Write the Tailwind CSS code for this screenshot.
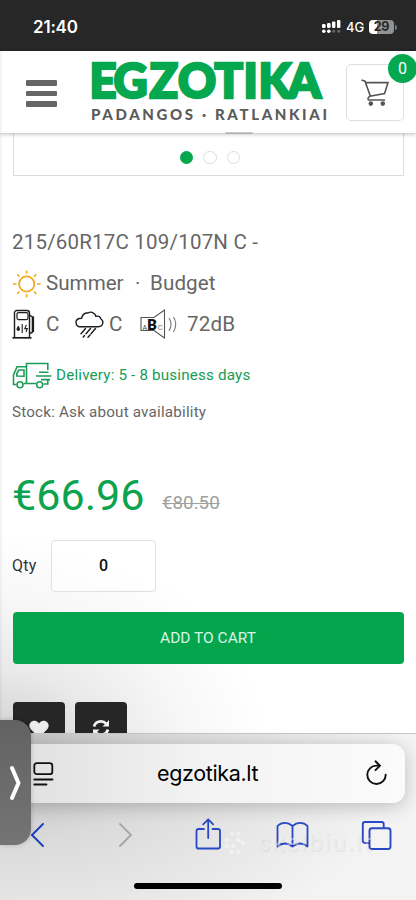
<!DOCTYPE html>
<html lang="en">
<head>
<meta charset="utf-8">
<title>Egzotika</title>
<script src="https://cdn.jsdelivr.net/npm/@tailwindcss/browser@4"></script>
</head>
<body class="bg-white">
<div class="relative flex h-[900px] w-[416px] flex-col overflow-hidden bg-white font-['Roboto',sans-serif] text-[#666]">

  <!-- status bar -->
  <div class="flex h-[51px] shrink-0 items-center bg-[#272727] pt-[3px] pl-[33px] text-white">
    <div class="w-[288px] font-['Inter',sans-serif] text-[17px] font-semibold leading-none tracking-[-0.2px]">21:40</div>
    <svg width="20" height="14" viewBox="0 0 20 14" fill="#fff"><rect x="1" y="4" width="3.6" height="4" rx="1.2"/><rect x="6" y="3" width="3.6" height="5" rx="1.2"/><rect x="11" y="1.5" width="3.4" height="6.5" rx="1"/><rect x="16" y="0" width="3.4" height="8" rx="1"/><circle cx="2.8" cy="11.3" r="1.8"/><circle cx="7.8" cy="11.3" r="1.8"/><circle cx="12.7" cy="11.3" r="1.5" fill="#666"/><circle cx="17.7" cy="11.3" r="1.5" fill="#666"/></svg>
    <div class="ml-[5px] w-[23px] font-['Inter',sans-serif] text-[13px] font-medium leading-none">4G</div>
    <div class="flex h-[14px] w-[25px] items-center justify-center rounded-[4px] bg-linear-to-r from-white from-30% to-[#929292] to-30% font-['Inter',sans-serif] text-[12.5px] font-bold leading-none tracking-[-0.3px] text-[#272727]">29</div>
    <div class="ml-[1px] h-[5px] w-[1.5px] rounded-r bg-[#777]"></div>
  </div>

  <!-- site header -->
  <div class="relative z-10 flex h-[82px] shrink-0 bg-white shadow-[0_1px_4px_rgba(0,0,0,0.28)]">
    <div class="mt-[29px] ml-[26px] flex w-[31px] flex-col gap-[5px]">
      <div class="h-[5.5px] rounded-[1px] bg-[#666]"></div>
      <div class="h-[5.5px] rounded-[1px] bg-[#666]"></div>
      <div class="h-[5.5px] rounded-[1px] bg-[#666]"></div>
    </div>
    <svg class="ml-[29px] overflow-visible" width="244" height="82" viewBox="86 51 244 82">
      <text x="89.5 113.5 149.5 178 214.5 243.5 258.5 288" y="98" font-family="Lato, sans-serif" font-weight="900" font-size="47" fill="#05a74f" stroke="#05a74f" stroke-width="2.6">EGZOTIKA</text>
      <text x="91" y="119.8" font-family="Lato, sans-serif" font-weight="900" font-size="15" fill="#5b5b5b" textLength="236" lengthAdjust="spacing">PADANGOS · RATLANKIAI</text>
    </svg>
    <div class="relative mt-[13px] ml-[16px] h-[57px] w-[58px] rounded-[5px] border border-[#dedede]">
      <svg class="mt-[13px] ml-[14px]" width="30" height="30" viewBox="0 0 30 30" fill="none" stroke="#555" stroke-width="1.6"><path d="M.5 2 4 3.2 9.5 18.5M5 4.6H27L23.6 15.5 8.8 18.2Q6 20.5 7.5 22H24"/><circle cx="9.8" cy="25.6" r="1.5" fill="#555"/><circle cx="21.8" cy="25.6" r="1.5" fill="#555"/></svg>
      <div class="absolute -top-[11px] left-[41px] flex size-[29px] items-center justify-center rounded-full bg-[#05a74f] text-[16px] text-white">0</div>
    </div>
    <div class="absolute top-[81px] left-[225px] h-[1.5px] w-[28px] rounded-full bg-[#777]/40"></div>
  </div>

  <!-- page content -->
  <div class="flex h-[600px] shrink-0 flex-col overflow-hidden bg-[radial-gradient(ellipse_270px_230px_at_0_630px,#c8c8c8_0%,#e9e9e9_40%,#f7f7f7_70%,#fff_100%)]">
    <div class="ml-[12.5px] flex h-[43px] w-[391px] shrink-0 items-center justify-center gap-[10px] border border-t-0 border-[#dcdcdc] pt-[7px] pl-[4px]">
      <div class="size-[13.5px] rounded-full bg-[#05a74f]"></div>
      <div class="size-[13.5px] rounded-full border border-[#e0dcdc]"></div>
      <div class="size-[13.5px] rounded-full border border-[#e0dcdc]"></div>
    </div>
    <div class="mt-[50px] ml-3 flex h-[32px] shrink-0 items-center text-[20.5px] tracking-[0.2px]"><span class="whitespace-nowrap">215/60R17C 109/107N C -</span></div>
    <div class="mt-[9px] ml-3 flex h-[32px] shrink-0 items-center text-[20.6px]">
      <svg width="29" height="29" viewBox="0 0 29 29" fill="none" stroke="#f0ac22" stroke-width="1.8"><circle cx="14.7" cy="15" r="7.6"/><path d="M14.7 1.5V4.7M14.7 25.3V28.5M1 15H4.5M25 15H28.5M5.3 5.3 7.5 7.7M22 22.5 24.2 24.9M24.2 5.3 22 7.7M5.3 24.9 7.5 22.5" stroke-width="1.6"/></svg>
      <span class="ml-[5px] w-[89px]">Summer</span><span class="w-[15px]">·</span><span class="tracking-[0.1px]">Budget</span>
    </div>
    <div class="mt-[9px] ml-3 flex h-[32px] shrink-0 items-center text-[20.6px]">
      <svg width="24" height="30" viewBox="0 0 24 30" fill="none" stroke="#1c1c1c" stroke-width="1.4"><path d="M.5 28.8H19.5" stroke-width="1.7"/><path d="M2.5 28V4Q2.5 1.5 5 1.5H15Q17.5 1.5 17.5 4V28M17.5 6 20.5 8V22Q20.5 24 19 24H17.5"/><path d="M21 7.5V23" stroke-width="2.2"/><rect x="5" y="3.6" width="11" height="7" rx="1.5" stroke-width="1.2"/><path d="M6.3 17.2Q4.3 20 5.3 21.3 6.5 22 7.4 21 8 20 6.3 17.2" fill="#222" stroke-width="1"/><path d="M10.2 15V24M14.3 16 12.8 19.6H15.3L14 23" stroke-width="1.1"/></svg>
      <span class="ml-[10px] w-[29px]">C</span>
      <svg width="29" height="27" viewBox="0 0 29 27" fill="none" stroke="#1c1c1c" stroke-width="1.4" stroke-linecap="round"><path d="M8 15.7Q1 16.5 1 11.5 1 7.2 6.5 7.2 8 1.5 13 2 16 .2 18.5 2.2 20.5 3.2 20.8 5.2 25 4.5 26 8 29 10 27.3 13.5 26 16 22 15.7Z"/><path d="M10.5 17.5 6 22.8M15.5 17.5 11 22.8M20.5 17.5 16 22.8M9.5 24.5 8.3 26M15 24 13 26.3"/></svg>
      <span class="ml-[5px] w-[31px]">C</span>
      <svg width="38" height="30" viewBox="0 0 38 30" fill="none" stroke="#555" stroke-width="1.1"><path d="M1 21.5V8.5H14L24.5 1V29L14 21.5H.5"/><path d="M29 9Q33 15 29 22M33.5 8Q38 15 33.5 23" stroke="#777"/><text x="2.5" y="20.5" font-family="Roboto" font-size="7" fill="#444" stroke="none">A</text><text x="7.3" y="20.8" font-family="Roboto" font-size="15" font-weight="900" fill="#111" stroke="none">B</text><text x="17.8" y="20.5" font-family="Roboto" font-size="7.5" fill="#777" stroke="none">C</text></svg>
      <span class="ml-[9px] tracking-[0.15px]">72dB</span>
    </div>
    <div class="mt-[22px] ml-3 flex h-[26px] shrink-0 items-center text-[15.2px] text-[#159d55]">
      <svg width="40" height="27" viewBox="0 0 40 27" fill="none" stroke="#1f9c59" stroke-width="1.6"><path d="M4.5 22.5H1.5V13L5 4.8H14.5V21.5M14.5 4.8V1.5H35.8V8M14.5 21.5H24M11.5 21.5H14.5M35.8 18V22H31.5M27 10.2H36.5M24 14H39.5M29 17.6H38"/><path d="M4.8 14V11.5L6.7 8H12V14.2Z"/><circle cx="8" cy="22.8" r="3"/><circle cx="27.7" cy="22.8" r="3"/></svg>
      <span class="ml-[4px] whitespace-nowrap tracking-[0.18px]">Delivery: 5 - 8 business days</span>
    </div>
    <div class="mt-[11px] ml-3 flex h-[26px] shrink-0 items-center text-[15.2px] tracking-[0.2px]">Stock: Ask about availability</div>
    <div class="mt-[43px] ml-3 flex h-[54px] shrink-0 items-center">
      <span class="w-[150px] text-[43px] leading-none tracking-[0.05px] text-[#0ca34f]">€66.96</span>
      <span class="pt-[16px] text-[18.8px] leading-none text-[#a0a0a0] line-through decoration-[1px]">€80.50</span>
    </div>
    <div class="mt-[18px] ml-3 flex h-[51px] shrink-0 items-center text-[16px] text-[#333]">
      <span class="w-[39px] tracking-[0.3px]">Qty</span>
      <div class="flex h-[52px] w-[105px] items-center justify-center rounded-[4px] border-[1.5px] border-[#e0e0e0] bg-white/60 pt-px font-medium text-[#111]">0</div>
    </div>
    <div class="mt-[21px] ml-[12.5px] flex h-[52px] w-[391px] shrink-0 items-center justify-center rounded-[4px] bg-[#05a54e] pt-px text-[15.5px] text-[#d8f5e4]">ADD TO CART</div>
    <div class="mt-[38px] ml-[12.5px] flex shrink-0 gap-[10.5px]">
      <div class="flex h-[52px] w-[52px] items-start justify-center rounded-[4px] bg-[#262626] pt-[18px]"><svg width="20" height="18" viewBox="0 0 20 18" fill="#ececec"><path d="M10 17.5 2 9.5C-2 5 2 0 6 .7 8 1 9 2.2 10 3.5 11 2.2 12 1 14 .7 18 0 22 5 18 9.5Z"/></svg></div>
      <div class="flex h-[52px] w-[52px] items-start justify-center rounded-[4px] bg-[#262626] pt-[17px]"><svg width="18" height="18" viewBox="0 0 18 18" fill="none" stroke="#f2f2f2" stroke-width="2.7"><path d="M2 7.5Q3.5 2.4 9 2.4 12 2.4 14.5 4.9M16 10.5Q14.5 15.6 9 15.6 6 15.6 3.5 13.1"/><path d="M17 1V7.5H10.5ZM1 17V10.5H7.5Z" fill="#f2f2f2" stroke="none"/></svg></div>
    </div>
  </div>

  <!-- browser toolbar -->
  <div class="flex h-[167px] shrink-0 flex-col border-t border-[#c6c6c6] bg-[radial-gradient(ellipse_400px_220px_at_0_20px,#bdbdbd_0%,#dadada_40%,#f3f3f3_100%)] font-['Inter',sans-serif]">
    <div class="mt-[10px] mr-[11px] flex h-[59px] shrink-0 items-center rounded-r-[13px] bg-linear-to-r from-[#dedede] via-[#f3f3f3] to-[#fbfbfb] pl-[32px] text-black shadow-[0_3px_18px_rgba(0,0,0,0.22)]">
      <svg width="22" height="24" viewBox="0 0 22 24" fill="none" stroke="#111" stroke-width="1.8" stroke-linecap="round"><rect x="2.3" y="1.2" width="18" height="11" rx="2.5"/><path d="M2.3 17.5H20.5M2.3 22.5H14.5"/></svg>
      <div class="ml-[103px] w-[208px] text-[21.5px] leading-none tracking-[-0.35px]">egzotika.lt</div>
      <svg class="mb-px" width="22" height="26" viewBox="0 0 22 26" fill="none" stroke="#111" stroke-width="1.9" stroke-linecap="round" stroke-linejoin="round"><path d="M14.5 5.6H11.5A9.2 9.2 0 1 0 20.7 14.6M10.5 1.3 15 5.7 10.5 10.2"/></svg>
    </div>
    <div class="relative mt-[12px] flex h-[40px] shrink-0 items-center">
      <svg class="ml-[30px]" width="15" height="26" viewBox="0 0 15 26" fill="none" stroke="#1c43bd" stroke-width="2" stroke-linecap="round"><path d="M13 2 2 13 13 24"/></svg>
      <svg class="ml-[73px]" width="15" height="26" viewBox="0 0 15 26" fill="none" stroke="#a5a5a5" stroke-width="1.8" stroke-linecap="round"><path d="M2 2 13 13 2 24"/></svg>
      <svg class="mb-[2px] ml-[62px]" width="27" height="34" viewBox="0 0 27 34" fill="none" stroke="#2848c4" stroke-width="1.8" stroke-linecap="round" stroke-linejoin="round"><path d="M9 12H3.5Q1.5 12 1.5 14V29.5Q1.5 31.5 3.5 31.5H23Q25 31.5 25 29.5V14Q25 12 23 12H17.5M13.2 21V2.5M8.2 7.3 13.2 2.3 18.2 7.3"/></svg>
      <svg class="ml-[54px]" width="33" height="28" viewBox="0 0 33 28" fill="none" stroke="#2848c4" stroke-width="1.8" stroke-linejoin="round"><path d="M16.5 5Q13 1.8 9 1.8 4.5 1.8 1.5 5V25.5Q5 22.5 9 22.5 13 22.5 16.5 25.5 20 22.5 24 22.5 28 22.5 31.5 25.5V5Q28.5 1.8 24 1.8 20 1.8 16.5 5V25"/></svg>
      <svg class="ml-[52px]" width="31" height="31" viewBox="0 0 31 31" fill="none" stroke="#2848c4" stroke-width="1.9"><path d="M8.5 23H4Q1.8 23 1.8 20.8V4.2Q1.8 2 4 2H20.5Q22.7 2 22.7 4.2V8"/><rect x="8.5" y="8.3" width="21" height="20.7" rx="2.5"/></svg>
      <!-- watermark -->
      <div class="absolute top-[16px] left-[224px] flex items-center gap-[12px] opacity-60">
        <svg width="22" height="24" viewBox="0 0 22 24" fill="#f6f6f6"><circle cx="8" cy="3" r="2.3"/><circle cx="14" cy="3" r="2.3"/><circle cx="3" cy="9" r="2.3"/><circle cx="14" cy="9" r="2.3"/><circle cx="19" cy="12" r="2.3"/><circle cx="3" cy="15" r="2.3"/><circle cx="9" cy="15" r="2.3"/><circle cx="8" cy="21" r="2.3"/><circle cx="14" cy="21" r="2.3"/></svg>
        <span class="text-[23px] leading-none font-medium tracking-[1.6px] text-[#f2f2f2]/70 [text-shadow:1px_1px_1px_rgba(0,0,0,0.1)]">skelbiu.lt</span>
      </div>
    </div>
    <div class="mt-[28px] ml-[134px] h-[6px] w-[148px] rounded-full bg-black"></div>
  </div>

  <!-- side panel handle -->
  <div class="absolute top-[720px] left-0 z-20 flex h-[125px] w-[31px] items-center rounded-r-[16px] bg-linear-to-b from-[#626262] to-[#747474] shadow-[0_0_5px_rgba(0,0,0,0.2)]">
    <svg class="ml-[8px]" width="14" height="36" viewBox="0 0 14 36" fill="none" stroke="#fff" stroke-width="4" stroke-linecap="round" stroke-linejoin="round"><path d="M4 3 10.5 18 4 33"/></svg>
  </div>
  <!-- left page edge -->
  <div class="absolute top-[51px] left-0 z-20 h-[669px] w-[3px] bg-linear-to-r from-black/6 to-transparent"></div>
</div>
</body>
</html>
